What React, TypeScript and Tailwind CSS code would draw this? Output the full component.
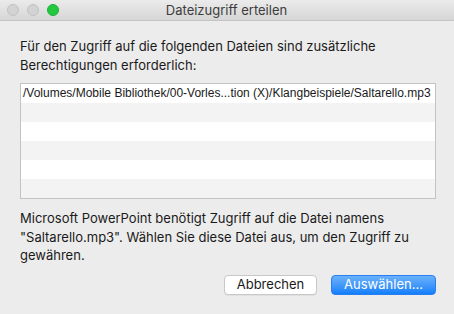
export default function App() {
  const rows = [
    "/Volumes/Mobile Bibliothek/00-Vorles...tion (X)/Klangbeispiele/Saltarello.mp3",
    "",
    "",
    "",
    "",
    "",
  ];

  return (
    <div className="w-[454px] h-[314px] bg-[#ececec] flex flex-col font-['Inter',sans-serif] text-[13px] text-[#1a1a1a] overflow-hidden">
      {/* ===== Title Bar ===== */}
      <div className="h-[21px] shrink-0 flex items-center border-b border-[#c4c4c4] bg-gradient-to-b from-[#ebebeb] to-[#d6d6d6] relative">
        <div className="flex items-center gap-[8px] pl-[7px]">
          <span className="w-[12px] h-[12px] rounded-full bg-[#d3d3d3] border border-[#c2c2c2]" />
          <span className="w-[12px] h-[12px] rounded-full bg-[#d3d3d3] border border-[#c2c2c2]" />
          <span className="w-[12px] h-[12px] rounded-full bg-[#22c83e] border border-[#1fb036]" />
        </div>
        <div className="flex-1 text-center text-[13px] text-[#3c3c3c] pr-[60px] leading-[21px]">
          Dateizugriff erteilen
        </div>
      </div>

      {/* ===== Body ===== */}
      <div className="flex flex-col pl-[20px] pr-[18px] pt-[16px]">
        <p className="leading-[19px]">
          Für den Zugriff auf die folgenden Dateien sind zusätzliche
          <br />
          Berechtigungen erforderlich:
        </p>

        {/* ===== File List ===== */}
        <div className="mt-[8px] border border-[#c3c3c3] bg-white">
          {rows.map((r, i) => (
            <div
              key={i}
              className={`h-[19px] px-[2px] font-['Liberation_Sans',Arial,sans-serif] text-[12px] leading-[19px] whitespace-nowrap overflow-hidden ${
                i % 2 === 1 ? "bg-[#f3f3f3]" : "bg-white"
              }`}
            >
              {r}
            </div>
          ))}
        </div>

        <p className="mt-[10px] leading-[18.5px]">
          Microsoft PowerPoint benötigt Zugriff auf die Datei namens
          <br />
          "Saltarello.mp3". Wählen Sie diese Datei aus, um den Zugriff zu
          <br />
          gewähren.
        </p>

        {/* ===== Buttons ===== */}
        <div className="flex justify-end gap-[14px] mt-[10px]">
          <button className="w-[93px] h-[20px] rounded-[4px] bg-white border border-[#c8c8c8] shadow-[0_1px_0_rgba(0,0,0,0.05)] text-[13px] text-[#1a1a1a] leading-none">
            Abbrechen
          </button>
          <button className="w-[105px] h-[20px] rounded-[4px] bg-gradient-to-b from-[#69b1fa] to-[#0d7ffb] border border-[#2a7ff0] text-[13px] text-white leading-none">
            Auswählen...
          </button>
        </div>
      </div>
    </div>
  );
}
